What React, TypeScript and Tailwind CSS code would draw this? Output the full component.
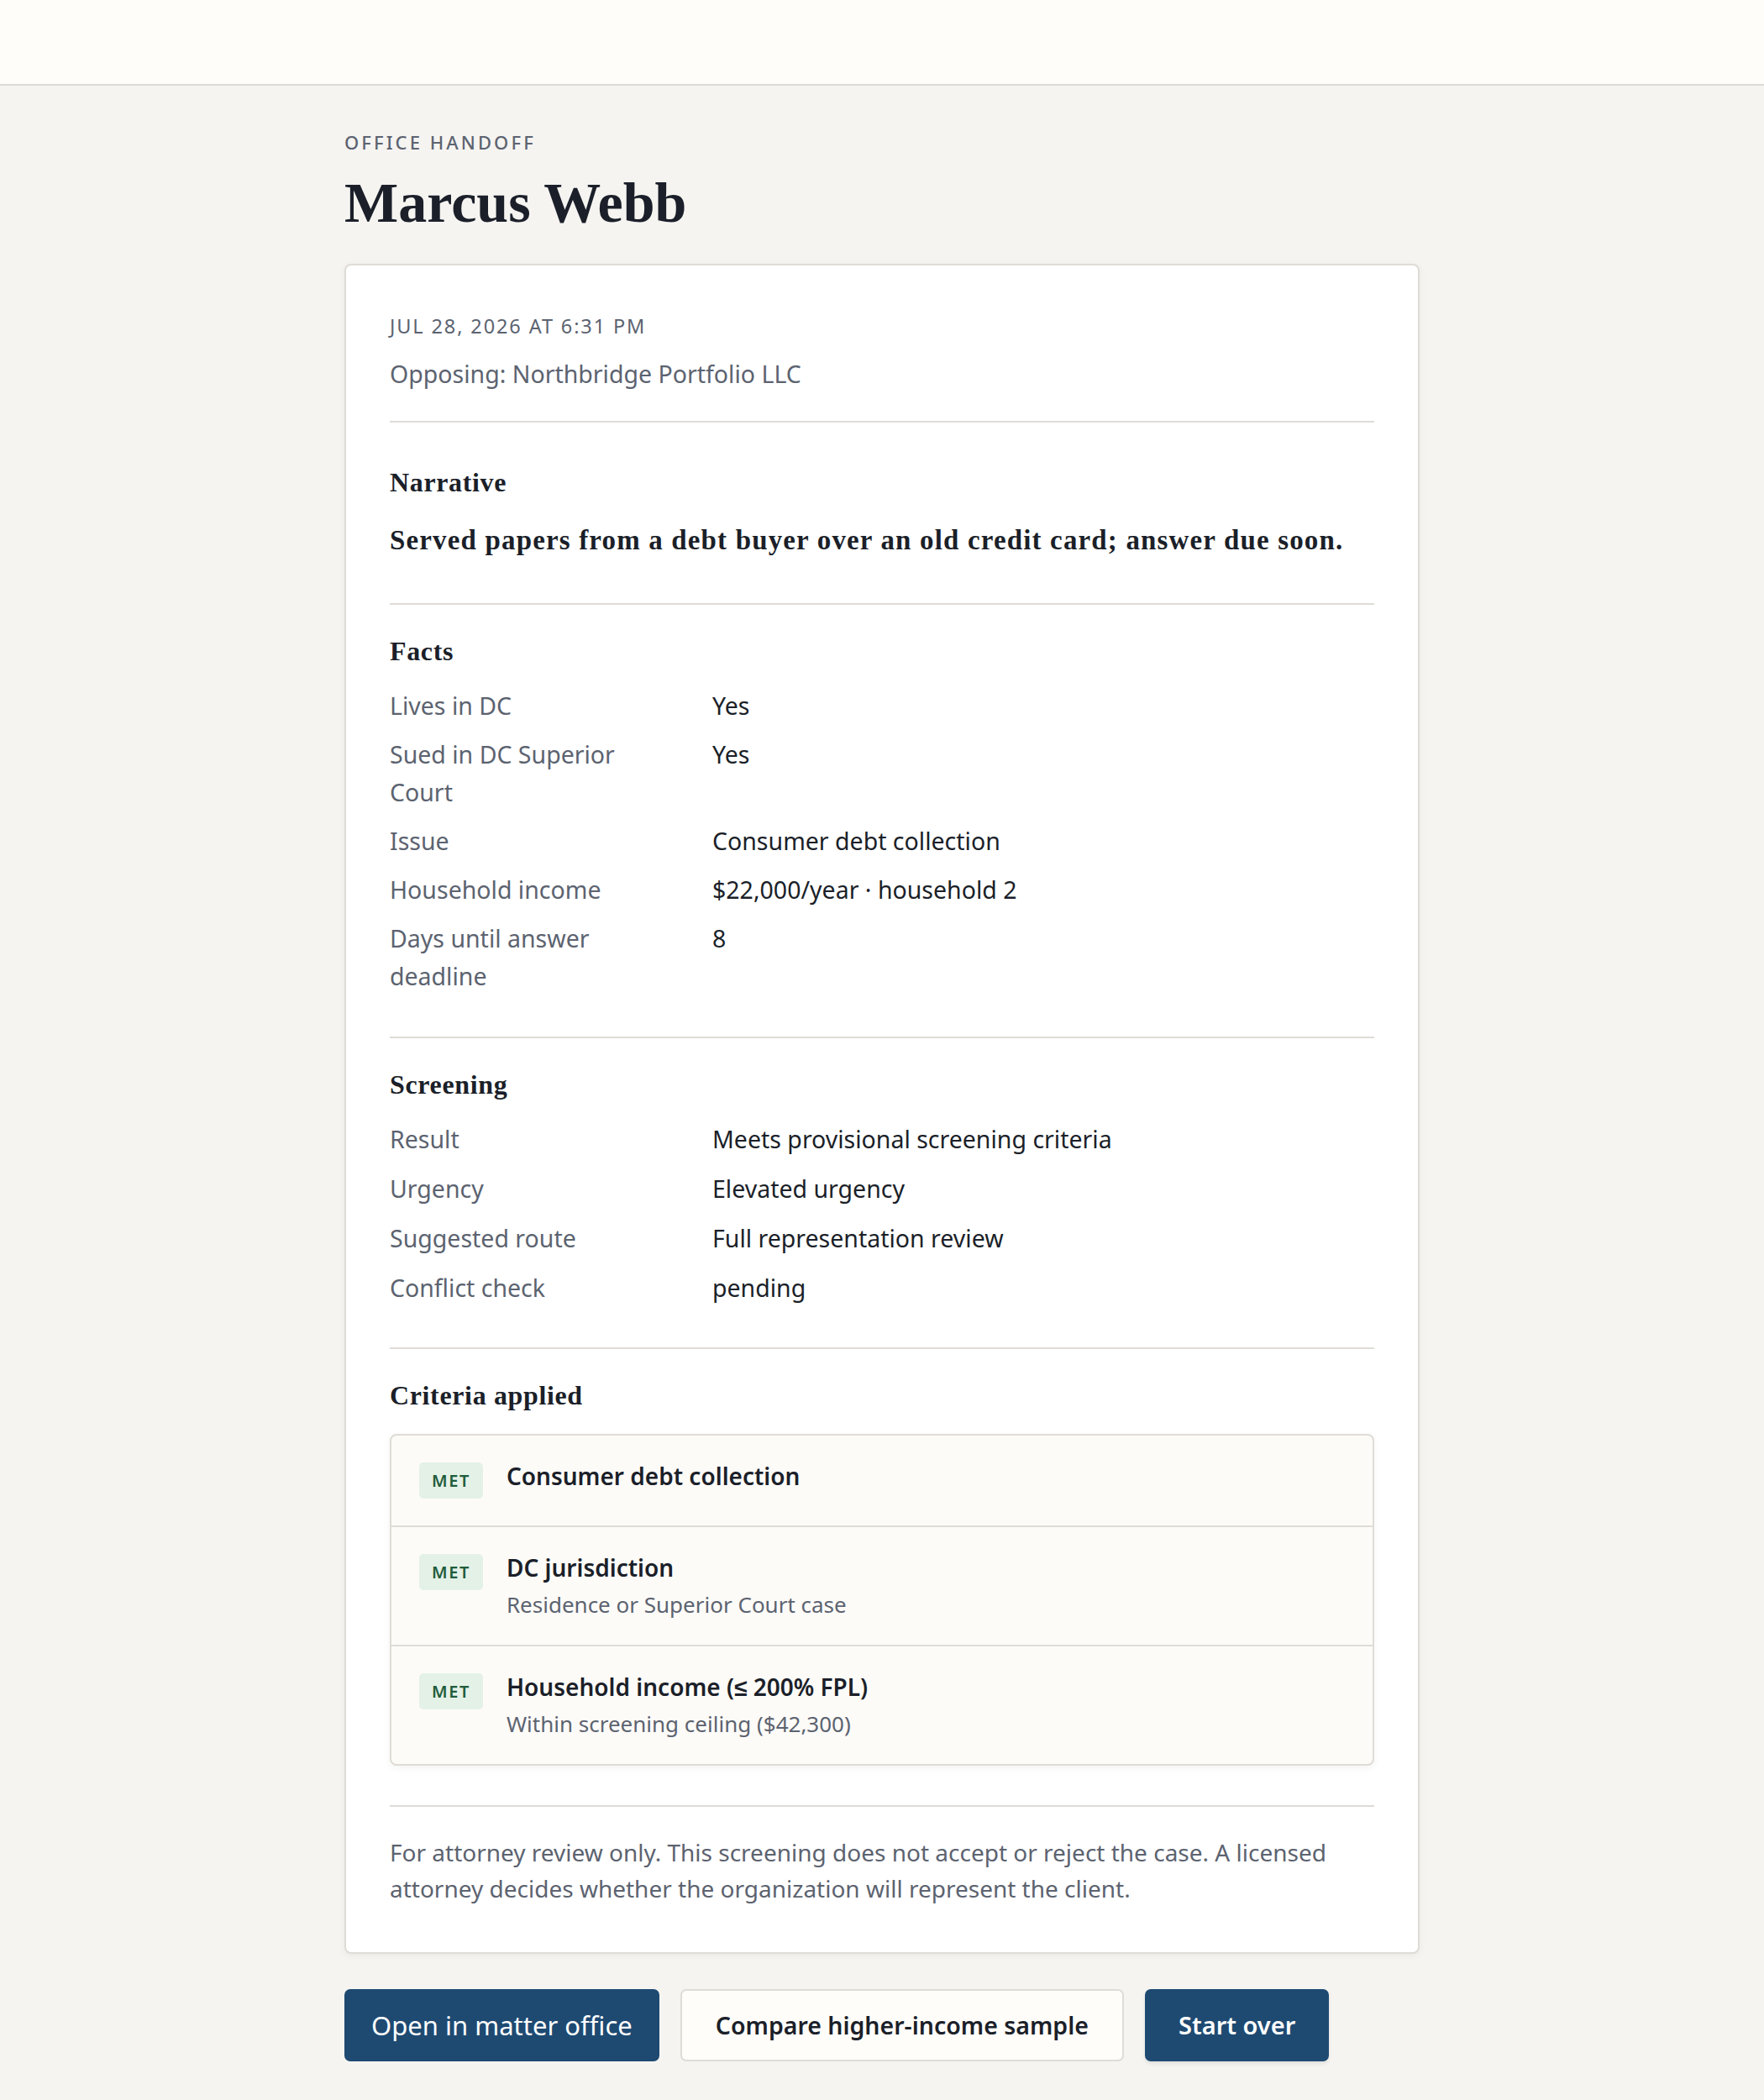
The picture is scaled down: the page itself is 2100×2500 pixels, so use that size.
import React from 'react';

const sans = "font-['Noto_Sans',_'Liberation_Sans',_sans-serif]";
const serif = "font-['Liberation_Serif',_serif]";

type Row = { label: string; value: string };

const facts: Row[] = [
  { label: 'Lives in DC', value: 'Yes' },
  { label: 'Sued in DC Superior Court', value: 'Yes' },
  { label: 'Issue', value: 'Consumer debt collection' },
  { label: 'Household income', value: '$22,000/year · household 2' },
  { label: 'Days until answer deadline', value: '8' },
];

const screening: Row[] = [
  { label: 'Result', value: 'Meets provisional screening criteria' },
  { label: 'Urgency', value: 'Elevated urgency' },
  { label: 'Suggested route', value: 'Full representation review' },
  { label: 'Conflict check', value: 'pending' },
];

const criteria = [
  { title: 'Consumer debt collection' },
  { title: 'DC jurisdiction', note: 'Residence or Superior Court case' },
  { title: 'Household income (≤ 200% FPL)', note: 'Within screening ceiling ($42,300)' },
];

function SectionTitle({ children }: { children: React.ReactNode }) {
  return (
    <h2 className={`${serif} text-[32px] leading-[40px] font-bold tracking-[0.02em] text-[#1b1f29]`}>{children}</h2>
  );
}

function DefList({ rows, gap }: { rows: Row[]; gap: string }) {
  return (
    <dl className={`mt-[23px] flex flex-col ${gap}`}>
      {rows.map((r) => (
        <div key={r.label} className="grid grid-cols-[330px_1fr] gap-x-[54px] text-[28.5px] leading-[45px]">
          <dt className="text-[#5c6370]">{r.label}</dt>
          <dd className="text-[#1b1f29]">{r.value}</dd>
        </div>
      ))}
    </dl>
  );
}

export default function App() {
  return (
    <div className={`${sans} min-h-screen bg-[#f5f4f1] text-[#1b1f29]`}>
      <header className="h-[102px] bg-[#fffdfa] border-b-2 border-[#dcdad4]" />

      <main className="w-[1280px] mx-auto pt-[51px] pb-[60px]">
        <p className="text-[22px] leading-[32px] font-medium tracking-[0.14em] uppercase text-[#5c6370]">
          Office Handoff
        </p>
        <h1 className={`${serif} mt-[14px] text-[68px] leading-[84px] font-bold text-[#1b1f29]`}>Marcus Webb</h1>

        <section className="mt-[31px] bg-white border-2 border-[#dfdcd6] rounded-[8px] shadow-[0_2px_8px_rgba(0,0,0,0.05)] px-[52px] pt-[54px] pb-[54px]">
          <div className="pb-[34px] border-b-2 border-[#dfdcd6]">
            <p className="text-[23.5px] leading-[36px] uppercase tracking-[0.08em] text-[#5c6370]">Jul 28, 2026 at 6:31 PM</p>
            <p className="mt-[17px] text-[28.5px] leading-[44px] text-[#5c6370]">Opposing: Northbridge Portfolio LLC</p>
          </div>

          <div className="pt-[51px] pb-[53px] border-b-2 border-[#dfdcd6]">
            <SectionTitle>Narrative</SectionTitle>
            <p className={`${serif} mt-[27px] text-[33px] leading-[44px] font-bold tracking-[0.035em] text-[#1b1f29]`}>
              Served papers from a debt buyer over an old credit card; answer due soon.
            </p>
          </div>

          <div className="pt-[35px] pb-[49px] border-b-2 border-[#dfdcd6]">
            <SectionTitle>Facts</SectionTitle>
            <DefList rows={facts} gap="gap-[13px]" />
          </div>

          <div className="pt-[35px] pb-[48px] border-b-2 border-[#dfdcd6]">
            <SectionTitle>Screening</SectionTitle>
            <DefList rows={screening} gap="gap-[14px]" />
          </div>

          <div className="pt-[35px] pb-[47px] border-b-2 border-[#dfdcd6]">
            <SectionTitle>Criteria applied</SectionTitle>
            <ul className="mt-[26px] bg-[#fdfbf8] border-2 border-[#dfdcd6] rounded-[8px] shadow-[0_3px_10px_rgba(0,0,0,0.05)] divide-y-2 divide-[#dfdcd6]">
              {criteria.map((c) => (
                <li key={c.title} className="flex items-start gap-[28px] px-[33px] py-[32px]">
                  <span className="shrink-0 h-[43px] px-[15px] flex items-center rounded-[5px] bg-[#e4f1e7] text-[#1f5c3b] text-[20px] font-semibold tracking-[0.08em]">
                    MET
                  </span>
                  <div>
                    <p className="text-[28px] leading-[32px] font-semibold text-[#1b1f29]">{c.title}</p>
                    {c.note && <p className="mt-[12px] text-[26px] leading-[32px] text-[#5c6370]">{c.note}</p>}
                  </div>
                </li>
              ))}
            </ul>
          </div>

          <p className="pt-[33px] text-[28px] leading-[43px] text-[#5c6370]">
            For attorney review only. This screening does not accept or reject the case. A licensed attorney decides
            whether the organization will represent the client.
          </p>
        </section>

        <div className="mt-[42px] flex gap-[25px]">
          <button className="h-[86px] px-[32px] rounded-[7px] bg-[#1e4a72] text-white text-[31px]">
            Open in matter office
          </button>
          <button className="h-[86px] px-[40px] rounded-[7px] bg-[#fffdfa] border-2 border-[#dfdcd6] text-[#1b1f29] text-[28.5px] font-semibold">
            Compare higher-income sample
          </button>
          <button className="h-[86px] px-[40px] rounded-[7px] bg-[#1e4a72] text-white text-[29px] font-semibold shadow-[0_3px_4px_rgba(0,0,0,0.08)]">
            Start over
          </button>
        </div>
      </main>
    </div>
  );
}
